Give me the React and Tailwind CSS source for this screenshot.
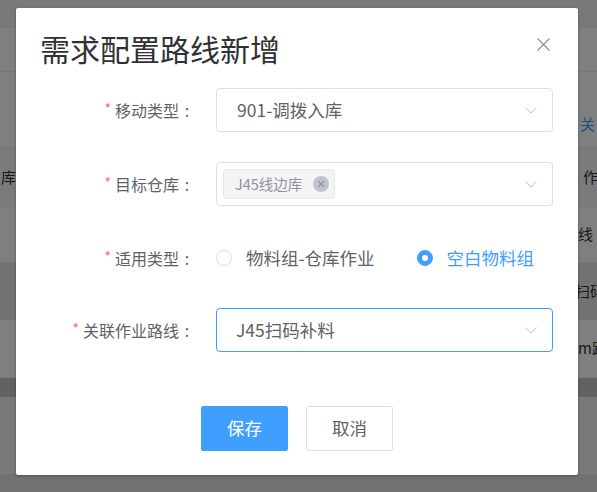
import React from "react";

const font = { fontFamily: '"Noto Sans CJK SC", "Noto Sans", sans-serif' };

function Chevron() {
  return (
    <svg width="12" height="7" viewBox="0 0 12 7" className="shrink-0">
      <polyline points="0.5,0.5 6,6 11.5,0.5" fill="none" stroke="#c0c4cc" strokeWidth="1" />
    </svg>
  );
}

function Label({ text }) {
  return (
    <div className="w-[179px] flex justify-end items-center text-[16px] leading-[20px] text-[#606266]">
      <span className="text-[#f56c6c] text-[14px] mr-[4px] -mt-[4px]">*</span>
      <span>{text}</span>
      <span className="w-[16px] text-center">:</span>
    </div>
  );
}

function SelectBox({ children, active }) {
  return (
    <div
      className={
        "ml-[21px] w-[337px] h-[44px] rounded-[4px] border flex items-center justify-between pr-[15px] " +
        (active ? "border-[#409eff]" : "border-[#dcdfe6]")
      }
    >
      {children}
      <Chevron />
    </div>
  );
}

function Radio({ checked, label }) {
  return (
    <div className="flex items-center">
      {checked ? (
        <span className="w-[16px] h-[16px] rounded-full bg-[#409eff] border border-[#409eff] flex items-center justify-center">
          <span className="w-[6px] h-[6px] rounded-full bg-white" />
        </span>
      ) : (
        <span className="w-[16px] h-[16px] rounded-full border border-[#dcdfe6] bg-white" />
      )}
      <span className={"ml-[14px] text-[17.5px] leading-[22px] " + (checked ? "text-[#409eff]" : "text-[#606266]")}>
        {label}
      </span>
    </div>
  );
}

// background page rows (behind the mask)
const rows = [
  { h: 28, bg: "bg-[#f3f3f3]" },
  { h: 44, bg: "bg-white" },
  { h: 76, bg: "bg-white", right: "关", rightColor: "text-[#409eff]", pt: "pt-[30px]", ml: "ml-[2px]" },
  { h: 59, bg: "bg-[#f5f7fa]", left: "库", right: "作", ml: "ml-[5px]" },
  { h: 56, bg: "bg-white", right: "线", ml: "ml-[0px]" },
  { h: 57, bg: "bg-[#e4e4e4]", right: "扫码", ml: "-ml-[3px]" },
  { h: 58, bg: "bg-white", right: "m路", ml: "ml-[0px]" },
];

export default function App() {
  return (
    <div className="relative w-[597px] h-[492px] overflow-hidden bg-[#f0f2f5]" style={font}>
      {/* page behind */}
      <div className="flex flex-col">
        {rows.map((r, i) => (
          <div
            key={i}
            className={"flex justify-between items-center border-b border-[#ebeef5] text-[15px] text-[#333] " + r.bg + " " + (r.pt || "")}
            style={{ height: r.h }}
          >
            <div className="w-[16px] flex justify-start pl-[1px]">
              {r.left && <span className="whitespace-nowrap">{r.left}</span>}
            </div>
            <div className={"w-[19px] whitespace-nowrap " + (r.rightColor || "")}>
              {r.right && <span className={"block " + r.ml}>{r.right}</span>}
            </div>
          </div>
        ))}
        <div className="h-[19px] bg-[#c4c4c4]" />
        <div className="h-[77px] bg-[#f0f2f5]" />
        <div className="h-[18px] bg-[#e2e2e4]" />
      </div>

      {/* mask */}
      <div className="absolute inset-0 bg-black/50" />

      {/* dialog */}
      <div className="absolute left-[16px] top-[8px] w-[562px] h-[467px] bg-white rounded-[2px] shadow-[0_1px_3px_rgba(0,0,0,0.3)] flex flex-col">
        <div className="flex justify-between items-start pt-[20px] pl-[24px] pr-[28px] h-[80px]">
          <div className="text-[30px] leading-[40px] text-[#303133]">需求配置路线新增</div>
          <svg width="13" height="13" viewBox="0 0 13 13" className="mt-[10px]">
            <path d="M0.5 0.5 L12.5 12.5 M12.5 0.5 L0.5 12.5" stroke="#909399" strokeWidth="1.3" />
          </svg>
        </div>

        <div className="flex flex-col">
          <div className="flex items-center h-[44px] mb-[30px]">
            <Label text="移动类型" />
            <SelectBox>
              <span className="pl-[20px] text-[17.5px] text-[#606266]">901-调拨入库</span>
            </SelectBox>
          </div>

          <div className="flex items-center h-[44px] mb-[30px]">
            <Label text="目标仓库" />
            <SelectBox>
              <span className="ml-[6px] h-[30px] pl-[11px] pr-[5px] bg-[#f4f4f5] border border-[#e9e9eb] rounded-[4px] flex items-center text-[14.5px] text-[#909399]">
                J45线边库
                <span className="ml-[11px] w-[16px] h-[16px] rounded-full bg-[#c0c4cc] flex items-center justify-center">
                  <svg width="8" height="8" viewBox="0 0 8 8">
                    <path d="M1 1 L7 7 M7 1 L1 7" stroke="#909399" strokeWidth="1.2" />
                  </svg>
                </span>
              </span>
            </SelectBox>
          </div>

          <div className="flex items-center h-[44px] mb-[28px]">
            <Label text="适用类型" />
            <div className="ml-[21px] flex items-center gap-[42px]">
              <Radio label="物料组-仓库作业" />
              <Radio checked label="空白物料组" />
            </div>
          </div>

          <div className="flex items-center h-[44px]">
            <Label text="关联作业路线" />
            <SelectBox active>
              <span className="pl-[19px] text-[17.5px] text-[#606266]">J45扫码补料</span>
            </SelectBox>
          </div>
        </div>

        <div className="flex justify-center gap-[18px] mt-[54px]">
          <button className="w-[87px] h-[45px] bg-[#409eff] border border-[#409eff] rounded-[2px] text-white text-[17.5px]">
            保存
          </button>
          <button className="w-[87px] h-[45px] bg-white border border-[#dcdfe6] rounded-[2px] text-[#606266] text-[17.5px]">
            取消
          </button>
        </div>
      </div>
    </div>
  );
}
